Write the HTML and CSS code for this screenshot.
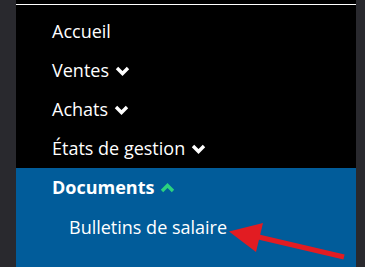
FILE: index.html
```html
<!DOCTYPE html>
<html lang="fr">
<head>
  <meta charset="UTF-8" />
  <meta name="viewport" content="width=device-width, initial-scale=1.0"/>
  <title>Menu</title>
  <link rel="stylesheet" href="styles.css">
</head>
<body>
  <nav class="menu">
    <hr class="sep">
    <ul class="items">
      <li><a href="#">Accueil</a></li>
      <li><a href="#">Ventes <svg class="chev" viewBox="0 0 15 10"><polyline points="2,2 7.5,7.5 13,2"/></svg></a></li>
      <li><a href="#">Achats <svg class="chev" viewBox="0 0 15 10"><polyline points="2,2 7.5,7.5 13,2"/></svg></a></li>
      <li><a href="#">États de gestion <svg class="chev" viewBox="0 0 15 10"><polyline points="2,2 7.5,7.5 13,2"/></svg></a></li>
    </ul>
    <div class="open">
      <a href="#" class="head">Documents <svg class="chev up" viewBox="0 0 15 10"><polyline points="2,8 7.5,2.5 13,8"/></svg></a>
      <a href="#" class="sub">Bulletins de salaire</a>
    </div>
  </nav>

  <svg class="arrow" width="365" height="267" viewBox="0 0 365 267">
    <line x1="344" y1="257" x2="250" y2="235" />
    <polygon points="229,231.5 263,223 256,252" />
  </svg>
</body>
</html>
```

FILE: styles.css
```css
body {
  margin: 0;
  background: #29292e;
  font-family: "Open Sans", sans-serif;
  overflow: hidden;
}
.menu {
  margin-left: 16px;
  width: 340px;
  height: 267px;
  background: #000;
  padding-top: 4px;
  box-sizing: border-box;
  display: flex;
  flex-direction: column;
}
.sep {
  margin: 0;
  border: none;
  height: 1px;
  background: #fff;
}
.items {
  list-style: none;
  margin: 7px 0 0;
  padding: 0;
}
.items a, .open a {
  display: flex;
  align-items: center;
  gap: 6px;
  height: 39px;
  line-height: 39px;
  padding-left: 36px;
  color: #fff;
  text-decoration: none;
  font-size: 18px;
}
.open {
  flex: 1;
  background: #015c9a;
}
.open .head {
  font-weight: bold;
}
.open .sub {
  padding-left: 53px;
  height: 41px;
  line-height: 41px;
}
.chev {
  width: 15px;
  height: 10px;
  fill: none;
  stroke: #fff;
  stroke-width: 3.4;
}
.chev.up {
  stroke: #2bd27f;
}
.arrow {
  position: absolute;
  left: 0;
  top: 0;
}
.arrow line {
  stroke: #e21c22;
  stroke-width: 5;
}
.arrow polygon {
  fill: #e21c22;
}
```
